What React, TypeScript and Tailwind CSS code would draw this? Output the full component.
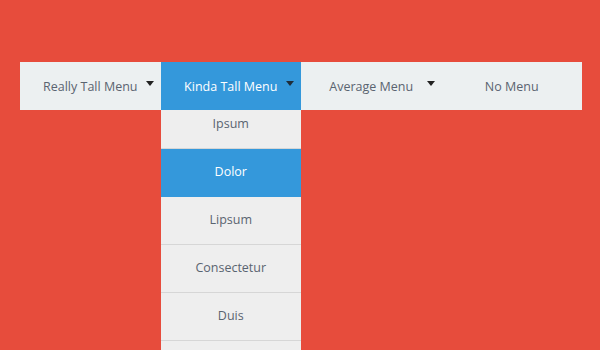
import React from "react";

function Caret({ dark = false }: { dark?: boolean }) {
  return (
    <span
      className={`absolute right-[7px] top-[19px] h-0 w-0 border-x-[4px] border-t-[5px] border-x-transparent ${dark ? "border-t-[#1f2d3a]" : "border-t-[#222]"}`}
    />
  );
}

export default function App() {
  const items = ["Ipsum", "Dolor", "Lipsum", "Consectetur", "Duis"];
  return (
    <div
      className="flex h-[350px] w-[600px] justify-center overflow-hidden bg-[#e74c3c] pt-[62px] pl-[2px]"
      style={{ fontFamily: '"Open Sans", "Noto Sans", sans-serif' }}
    >
      <div className="flex h-[48px] w-[562px] text-[12.5px]">
        <div className="relative z-10 flex flex-1 items-center justify-center bg-[#ecf0f1] pt-[3px] text-[#5a6470]">
          Really Tall Menu
          <Caret />
        </div>
        <div className="relative flex flex-1">
          <div className="relative z-10 flex w-full items-center justify-center bg-[#3498db] pt-[3px] text-white">
            Kinda Tall Menu
            <Caret dark />
          </div>
          <div className="absolute left-0 top-[39px] flex w-full flex-col bg-[#eeeeee]">
            {items.map((t) => (
              <div
                key={t}
                className={`flex h-[48px] items-center justify-center border-b ${t === "Dolor" ? "border-[#3498db] bg-[#3498db] text-white" : "border-[#d6d6d6] text-[#5a6470]"}`}
              >
                {t}
              </div>
            ))}
            <div className="h-[40px]" />
          </div>
        </div>
        <div className="relative z-10 flex flex-1 items-center justify-center bg-[#ecf0f1] pt-[3px] text-[#5a6470]">
          Average Menu
          <Caret />
        </div>
        <div className="relative z-10 flex flex-1 items-center justify-center bg-[#ecf0f1] pt-[3px] text-[#5a6470]">
          No Menu
        </div>
      </div>
    </div>
  );
}
